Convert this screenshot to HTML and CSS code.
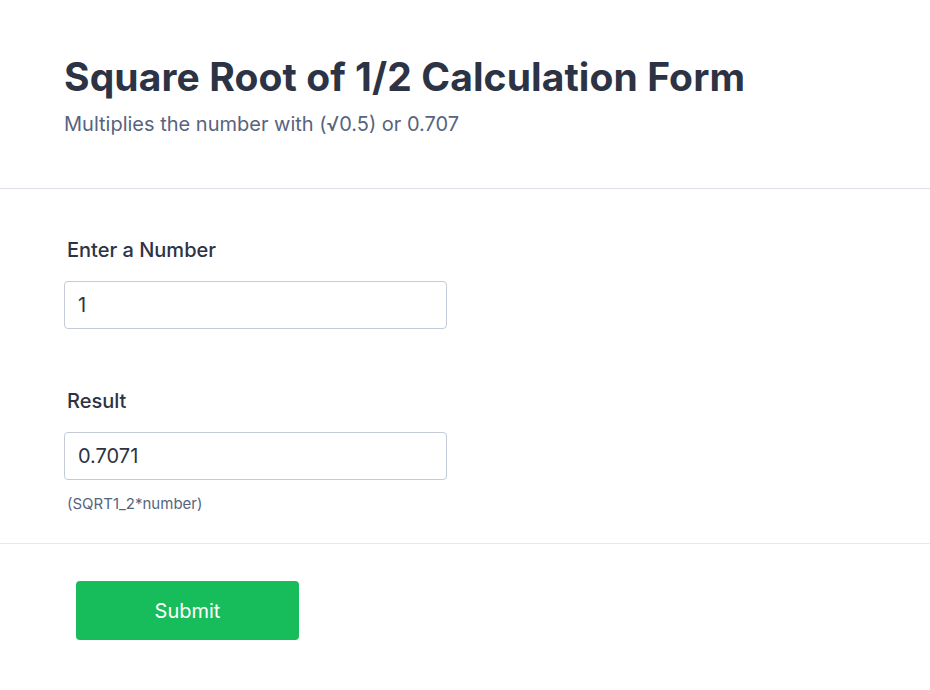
FILE: index.html
```html
<!DOCTYPE html>
<html>
<head>
<meta charset="utf-8">
<link rel="stylesheet" href="styles.css">
</head>
<body>
<div class="form">
  <header class="header">
    <h1 class="title">Square Root of 1/2 Calculation Form</h1>
    <p class="subtitle">Multiplies the number with (√0.5) or 0.707</p>
  </header>
  <section class="fields">
    <div class="field">
      <label class="label">Enter a Number</label>
      <div class="input">1</div>
    </div>
    <div class="field">
      <label class="label">Result</label>
      <div class="input">0.7071</div>
      <div class="hint">(SQRT1_2*number)</div>
    </div>
  </section>
  <footer class="actions">
    <button class="submit">Submit</button>
  </footer>
</div>
</body>
</html>
```
FILE: styles.css
```css
* { box-sizing: border-box; }
html, body { margin: 0; padding: 0; background: #fff; }
body { font-family: Inter, "Noto Sans", sans-serif; color: #2c3345; }
.form { width: 930px; }
.header {
  padding: 54px 64px 0;
  height: 189px;
  border-bottom: 1px solid #dfe1e9;
}
.title {
  margin: 0;
  font-size: 39px;
  font-weight: 700;
  line-height: 46px;
  letter-spacing: 0.1px;
}
.subtitle {
  margin: 11px 0 0;
  font-size: 20px;
  line-height: 26px;
  color: #57647e;
}
.fields {
  padding: 48px 64px 30px;
  border-bottom: 1px solid #e6e8ee;
  display: flex;
  flex-direction: column;
  gap: 59px;
}
.field { display: flex; flex-direction: column; }
.label {
  font-size: 20px;
  line-height: 26px;
  font-weight: 500;
  padding-left: 3px;
  margin-bottom: 18px;
}
.input {
  width: 383px;
  height: 48px;
  border: 1px solid #c3cad8;
  border-radius: 4px;
  padding: 0 13px;
  display: flex;
  align-items: center;
  font-size: 20px;
  color: #2c3345;
}
.hint {
  margin-top: 15px;
  padding-left: 3px;
  font-size: 15px;
  line-height: 18px;
  color: #57647e;
}
.actions { padding: 37px 76px; }
.submit {
  width: 223px;
  height: 59px;
  border: 0;
  border-radius: 4px;
  background: #18bd5b;
  color: #fff;
  font-family: Inter, sans-serif;
  font-size: 20px;
  font-weight: 400;
}
```
